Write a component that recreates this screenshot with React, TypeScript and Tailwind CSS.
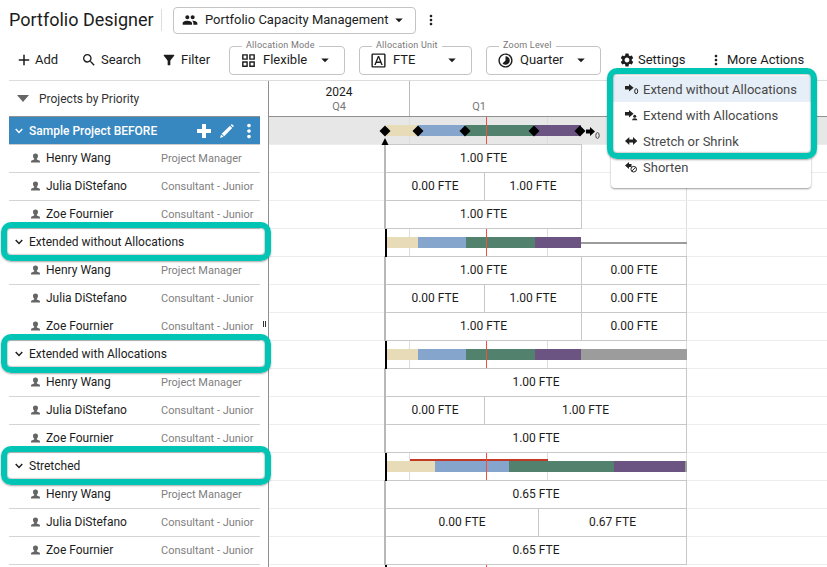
import type { ReactNode } from "react";
import {
    MdAdd,
    MdArrowDropDown,
    MdFilterAlt,
    MdGroup,
    MdMoreVert,
    MdOutlineFontDownload,
    MdOutlineGridView,
    MdSearch,
    MdSettings,
    MdTimelapse,
} from "react-icons/md";

type Cell = { text: string; width: string };
type Person = { name: string; role: string; cells: Cell[]; noLine?: boolean };
type Project = {
    name: string;
    segments: string[];
    people: Person[];
    selected?: boolean;
    tail?: "line" | "bar";
    late?: boolean;
};

const roles = ["Project Manager", "Consultant - Junior", "Consultant - Junior"];
const names = ["Henry Wang", "Julia DiStefano", "Zoe Fournier"];

const team = (cells: Cell[][], noLine?: number): Person[] =>
    names.map((name, i) => ({ name, role: roles[i], cells: cells[i], noLine: noLine === i }));

const baseSegments = [
    "w-[31px] bg-[#e8dcb8]",
    "w-12 bg-[#86a5cd]",
    "w-[69px] bg-[#52826d]",
    "w-[46px] bg-[#6c5482]",
];

const projects: Project[] = [
    {
        name: "Sample Project BEFORE",
        selected: true,
        segments: baseSegments,
        people: team([
            [{ text: "1.00 FTE", width: "w-[196px]" }],
            [{ text: "0.00 FTE", width: "w-[99px]" }, { text: "1.00 FTE", width: "w-[97px]" }],
            [{ text: "1.00 FTE", width: "w-[196px]" }],
        ]),
    },
    {
        name: "Extended without Allocations",
        segments: baseSegments,
        tail: "line",
        people: team([
            [{ text: "1.00 FTE", width: "w-[196px]" }, { text: "0.00 FTE", width: "w-[105px]" }],
            [
                { text: "0.00 FTE", width: "w-[99px]" },
                { text: "1.00 FTE", width: "w-[97px]" },
                { text: "0.00 FTE", width: "w-[105px]" },
            ],
            [{ text: "1.00 FTE", width: "w-[196px]" }, { text: "0.00 FTE", width: "w-[105px]" }],
        ], 1),
    },
    {
        name: "Extended with Allocations",
        segments: baseSegments,
        tail: "bar",
        people: team([
            [{ text: "1.00 FTE", width: "w-[301px]" }],
            [{ text: "0.00 FTE", width: "w-[99px]" }, { text: "1.00 FTE", width: "w-[202px]" }],
            [{ text: "1.00 FTE", width: "w-[301px]" }],
        ]),
    },
    {
        name: "Stretched",
        late: true,
        segments: [
            "w-12 bg-[#e8dcb8]",
            "w-[74px] bg-[#86a5cd]",
            "w-[105px] bg-[#52826d]",
            "w-[71px] bg-[#6c5482]",
            "w-0.5 bg-[#9c9c9c]",
        ],
        people: team([
            [{ text: "0.65 FTE", width: "w-[301px]" }],
            [{ text: "0.00 FTE", width: "w-[153px]" }, { text: "0.67 FTE", width: "w-[148px]" }],
            [{ text: "0.65 FTE", width: "w-[301px]" }],
        ]),
    },
];

const milestones = ["left-[110px]", "left-[143px]", "left-[190px]", "left-[259px]", "left-[305px]"];

function Chevron() {
    return (
        <svg viewBox="0 0 8 6" className="h-1.5 w-2 shrink-0" fill="none" stroke="currentColor" strokeWidth="1.4">
            <path d="M0.7 1 4 4.4 7.3 1" />
        </svg>
    );
}

function PersonIcon() {
    return (
        <svg viewBox="0 0 9 10" className="h-2.5 w-[9px] shrink-0" fill="#666">
            <path d="M4.5 0.500C2.700 0.500 1.800 1.700 2 3.200 2.100 4.500 2.600 5.200 3.200 5.700V6.600L.6 7.500Q0 7.800 0 8.500V9.500H9V8.500Q9 7.800 8.400 7.500L5.800 6.600V5.700C6.400 5.200 6.900 4.500 7 3.200 7.200 1.700 6.300.5 4.500.5Z" />
        </svg>
    );
}

function BoldPlus() {
    return (
        <svg viewBox="0 0 14 14" className="size-3.5" fill="currentColor">
            <path d="M5 0h4v5h5v4H9v5H5V9H0V5h5Z" />
        </svg>
    );
}

function Pencil() {
    return (
        <svg viewBox="0 0 14 14" className="size-3.5" fill="currentColor">
            <path d="M0 14 1.200 10.400 3.600 12.800ZM1.700 9.700 10 1.700 12.200 3.900 4.200 12.200ZM10.600 1.100 11.300.4Q11.800 0 12.300.4L13.500 1.600Q14 2.100 13.500 2.600L12.800 3.300Z" />
        </svg>
    );
}

function ExtendEmptyIcon() {
    return (
        <svg viewBox="0 0 14 11" className="h-[11px] w-3.5" fill="currentColor">
            <path d="M0 2h4V0l4.600 3.700L4 7.400V5.400H0Z" />
            <ellipse cx="11.2" cy="7.2" rx="1.5" ry="2.500" fill="none" stroke="currentColor" />
        </svg>
    );
}

function ExtendPersonIcon() {
    return (
        <svg viewBox="0 0 14 11" className="h-[11px] w-3.5" fill="currentColor">
            <path d="M0 2h4V0l4.600 3.700L4 7.400V5.400H0Z" />
            <circle cx="9.700" cy="6.200" r="1.500" />
            <path d="M7 10.300Q7 8.300 9.700 8.300T12.400 10.300Z" />
        </svg>
    );
}

function StretchIcon() {
    return (
        <svg viewBox="0 0 14 11" className="h-[11px] w-3.5" fill="currentColor">
            <path d="M0 5 4.300 1V3.500H8V1L12.300 5 8 9V6.500H4.300V9Z" />
        </svg>
    );
}

function ShortenIcon() {
    return (
        <svg viewBox="0 0 14 11" className="h-[11px] w-3.5" fill="currentColor">
            <path d="M0 3.500 4 0V2H6.500V5H4V7Z" />
            <circle cx="8.700" cy="7.200" r="2.800" fill="#fff" stroke="currentColor" />
            <path d="M6.800 9.100 10.600 5.300" stroke="currentColor" />
        </svg>
    );
}

function Frame({ className }: { className: string }) {
    return (
        <div
            className={`pointer-events-none absolute z-10 rounded-[10px] border-[6px] border-[#00c5b5] shadow-[0_1px_2px_rgba(0,0,0,0.35),inset_0_0_2px_rgba(0,0,0,0.6)] ${className}`}
        />
    );
}

function ToolbarSelect({ id, label, value, icon, width }: { id: string; label: string; value: string; icon: ReactNode; width: string }) {
    return (
        <div className={`relative flex h-[29px] items-center rounded-[4px] border border-[#c4c4c4] pl-2.5 ${width}`}>
            <label htmlFor={id} className="absolute -top-2 left-3 bg-white px-1 text-[9px] leading-3 tracking-wide whitespace-nowrap text-[#777]">{label}</label>
            {icon}
            <select id={id} className="h-full min-w-0 grow appearance-none bg-transparent pl-1.5 text-[13px] outline-none">
                <option>{value}</option>
            </select>
            <MdArrowDropDown className="pointer-events-none absolute right-2.5 size-[18px]" />
        </div>
    );
}

function SettingsMenu() {
    const items = [
        { text: "Extend without Allocations", icon: <ExtendEmptyIcon /> },
        { text: "Extend with Allocations", icon: <ExtendPersonIcon /> },
        { text: "Stretch or Shrink", icon: <StretchIcon /> },
        { text: "Shorten", icon: <ShortenIcon /> },
    ];
    return (
        <div className="absolute top-6 -left-2 z-20 w-[200px] rounded-[4px] bg-white pt-0.5 pb-2 shadow-[0_1px_2px_rgba(0,0,0,0.4)]">
            {items.map((item, i) => (
                <button
                    key={item.text}
                    className={`flex h-[26px] w-full items-center gap-1 pl-3.5 text-[13px] whitespace-nowrap text-[#484848] ${i === 0 ? "bg-[#e6eef7]" : ""}`}
                >
                    <span className="text-[#222]">{item.icon}</span>
                    {item.text}
                </button>
            ))}
            <Frame className="-top-1.5 -right-1.5 -left-1 h-[91px]" />
        </div>
    );
}

function Toolbar() {
    return (
        <div>
            <div className="flex h-10 items-center">
                <h1 className="w-[152px] text-lg whitespace-nowrap">Portfolio Designer</h1>
                <div className="mr-[11px] h-[22px] w-px bg-[#ddd]" />
                <div className="relative flex h-[27px] w-[243px] items-center rounded-[4px] border border-[#c4c4c4] pl-2">
                    <MdGroup className="size-4" />
                    <select aria-label="View" className="h-full min-w-0 grow appearance-none bg-transparent pl-[7px] text-[13px] outline-none">
                        <option>Portfolio Capacity Management</option>
                    </select>
                    <MdArrowDropDown className="pointer-events-none absolute right-[7px] size-[18px]" />
                </div>
                <button aria-label="View options" className="ml-[7px]"><MdMoreVert className="size-4" /></button>
            </div>
            <div className="flex h-10 items-center text-[13px] whitespace-nowrap">
                <div className="flex w-[220px] shrink-0 items-center pl-1.5">
                    <button className="flex w-[65px] items-center gap-0.5"><MdAdd className="size-[18px]" />Add</button>
                    <button className="flex w-20 items-center gap-1 pl-px"><MdSearch className="size-4" />Search</button>
                    <button className="flex items-center gap-1 pl-px"><MdFilterAlt className="size-4" />Filter</button>
                </div>
                <div className="flex shrink-0 gap-3.5">
                    <ToolbarSelect id="mode" label="Allocation Mode" value="Flexible" width="w-[116px]" icon={<MdOutlineGridView className="size-[17px]" />} />
                    <ToolbarSelect id="unit" label="Allocation Unit" value="FTE" width="w-[113px]" icon={<MdOutlineFontDownload className="size-[17px]" />} />
                    <ToolbarSelect id="zoom" label="Zoom Level" value="Quarter" width="w-[115px]" icon={<MdTimelapse className="size-[17px]" />} />
                </div>
                <div className="relative ml-[18px] w-[89px] shrink-0">
                    <button className="flex items-center gap-[3px]" aria-expanded="true"><MdSettings className="size-4" />Settings</button>
                    <SettingsMenu />
                </div>
                <button className="flex items-center gap-[3px]"><MdMoreVert className="size-4" />More Actions</button>
            </div>
        </div>
    );
}

function ProjectRow({ project }: { project: Project }) {
    if (project.selected) {
        return (
            <tr>
                <td colSpan={2} className="h-7 border-b border-[#ccc] bg-[#3787c0] p-0 text-white">
                    <div className="flex items-center pl-1.5">
                        <Chevron />
                        <span className="grow pl-1.5 text-xs font-medium">{project.name}</span>
                        <button aria-label="Add"><BoldPlus /></button>
                        <button aria-label="Edit" className="pl-[9px]"><Pencil /></button>
                        <button aria-label="More" className="pl-1"><MdMoreVert className="size-[22px]" /></button>
                    </div>
                </td>
            </tr>
        );
    }
    return (
        <tr>
            <td colSpan={2} className="relative h-7 p-0 pb-0.5">
                <button className="flex items-center gap-1.5 pl-1.5 text-xs">
                    <Chevron />
                    {project.name}
                </button>
                <Frame className="-top-[7px] -right-[11px] -left-2 h-[39px]" />
            </td>
        </tr>
    );
}

function PersonRow({ person }: { person: Person }) {
    const line = person.noLine ? "border-transparent" : "border-[#d4d4d4]";
    return (
        <tr>
            <td className={`h-7 border-b p-0 pb-0.5 pl-[22px] ${line}`}>
                <div className="flex items-center gap-1.5 text-xs whitespace-nowrap"><PersonIcon />{person.name}</div>
            </td>
            <td className={`h-7 w-[99px] border-b p-0 text-[11px] leading-4 whitespace-nowrap text-[#808080] ${line}`}>{person.role}</td>
        </tr>
    );
}

function ResourceTable() {
    return (
        <div className="relative w-[259px] shrink-0">
            <table className="w-[251px] table-fixed border-separate border-spacing-0">
                <colgroup>
                    <col />
                    <col className="w-[99px]" />
                </colgroup>
                <thead>
                    <tr>
                        <th colSpan={2} className="h-9 border-b border-[#909090] p-0 text-left text-xs font-normal text-[#333]">
                            <div className="flex items-center gap-2.5 pl-2">
                                <svg viewBox="0 0 12 7" className="h-[7px] w-3" fill="#666"><path d="M0 0h12L6 7Z" /></svg>
                                Projects by Priority
                            </div>
                        </th>
                    </tr>
                </thead>
                <tbody>
                    {projects.map((project) => [
                        <ProjectRow key={project.name} project={project} />,
                        ...project.people.map((person) => <PersonRow key={project.name + person.name} person={person} />),
                    ])}
                </tbody>
            </table>
            {/* splitter handle */}
            <div className="absolute top-60 right-0.5 flex h-1.5 w-[3px] justify-between border-x border-[#333]" />
        </div>
    );
}

function GridLines() {
    return (
        <div className="absolute inset-0 flex border-b border-[#ededed]">
            <div className="w-[141px] border-r border-[#ddd]" />
            <div className="w-[138px] border-r border-[#ddd]" />
            <div className="w-[139px] border-r border-[#ddd]" />
        </div>
    );
}

function ProjectTrack({ project }: { project: Project }) {
    return (
        <div className={`relative flex h-7 items-center pb-px pl-[118px] ${project.selected ? "bg-[#e7e7e7]" : ""}`}>
            <GridLines />
            {!project.selected && <div className="absolute inset-y-0 left-[116px] z-10 w-0.5 bg-black" />}
            <div className="relative flex h-[11px]">
                {project.segments.map((segment) => <div key={segment} className={segment} />)}
                {project.tail === "bar" && <div className="w-[106px] bg-[#9c9c9c]" />}
                {project.tail === "line" && <div className="mt-[5px] h-0.5 w-[106px] bg-[#9c9c9c]" />}
            </div>
            {project.late && <div className="absolute top-1.5 left-[141px] h-0.5 w-[138px] bg-[#c23a26]" />}
            <div className="absolute inset-y-0 left-[217px] w-px bg-[#f0503c]" />
            {project.selected && (
                <>
                    {milestones.map((left) => (
                        <svg key={left} viewBox="0 0 12 12" className={`absolute top-2 size-3 ${left}`}><path d="M6 0.500 11.500 6 6 11.500 0.500 6Z" /></svg>
                    ))}
                    <svg viewBox="0 0 8 7" className="absolute bottom-0 left-[112px] z-10 h-[7px] w-2"><path d="M4 0 7.500 7H.5Z" /></svg>
                    <svg viewBox="0 0 15 13" className="absolute top-2.5 left-[317px] h-[13px] w-[15px]">
                        <path d="M0 2.500h4V0l5 4.500L4 9V6.500H0Z" />
                        <ellipse cx="11.500" cy="8.500" rx="1.700" ry="2.900" fill="none" stroke="#444" />
                    </svg>
                </>
            )}
        </div>
    );
}

function AllocationTrack({ cells }: { cells: Cell[] }) {
    return (
        <div className="relative h-7 pl-[115px]">
            <GridLines />
            <div className="relative -top-px flex h-[29px] w-fit border-l-2 border-[#b8b8b8] text-xs">
                {cells.map((cell, i) => (
                    <div key={i} className={`flex items-center justify-center border-y border-r border-[#c8c8c8] bg-white pb-0.5 ${cell.width}`}>{cell.text}</div>
                ))}
            </div>
        </div>
    );
}

function Timeline() {
    return (
        <div className="min-w-0 grow overflow-hidden border-l border-[#909090]">
            <div className="flex h-9 border-b border-[#909090] text-center text-xs">
                <div className="w-[141px] border-r border-[#bbb] pt-0.5">
                    <div className="leading-[18px]">2024</div>
                    <div className="text-[11px] leading-3 text-[#777]">Q4</div>
                </div>
                <div className="w-[138px] pt-5 text-[11px] leading-3 text-[#777]">Q1</div>
            </div>
            {projects.map((project) => (
                <div key={project.name}>
                    <ProjectTrack project={project} />
                    {project.people.map((person) => <AllocationTrack key={person.name} cells={person.cells} />)}
                </div>
            ))}
            <div className="relative h-0.5">
                <div className="absolute inset-y-0 left-[116px] w-0.5 bg-black" />
                <div className="absolute inset-y-0 left-[217px] w-px bg-[#f0503c]" />
            </div>
        </div>
    );
}

export default function App() {
    return (
        <div className="min-h-screen overflow-hidden bg-white pl-[9px] font-['Roboto',sans-serif] text-[#1c1c1c]">
            <Toolbar />
            <div className="flex border-t border-[#ddd]">
                <ResourceTable />
                <Timeline />
            </div>
        </div>
    );
}
